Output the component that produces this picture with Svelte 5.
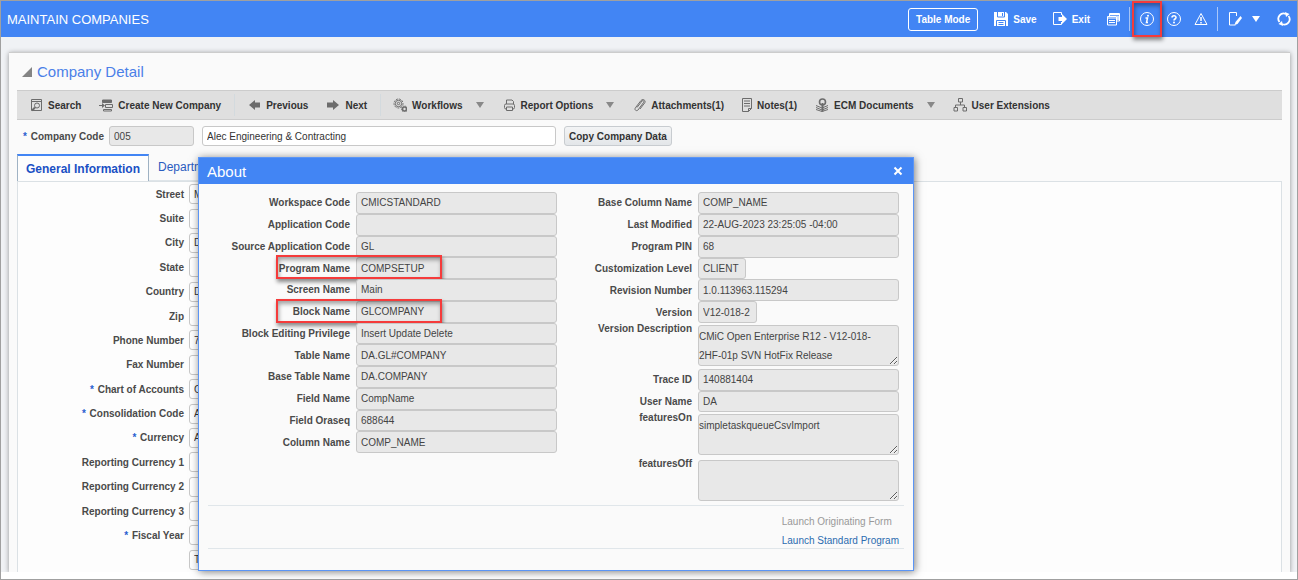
<script lang="ts">
  type Field = {
    label: string
    value: string
    width?: number
    marked?: boolean
  }

  const toolbar = [
    { icon: 'search', label: 'Search' },
    { icon: 'create', label: 'Create New Company', divider: true },
    { icon: 'prev', label: 'Previous' },
    { icon: 'next', label: 'Next', divider: true },
    { icon: 'gears', label: 'Workflows', menu: true },
    { icon: 'print', label: 'Report Options', menu: true },
    { icon: 'clip', label: 'Attachments(1)' },
    { icon: 'notes', label: 'Notes(1)', narrow: true },
    { icon: 'ecm', label: 'ECM Documents', menu: true },
    { icon: 'tree', label: 'User Extensions' },
  ]

  const company = [
    { label: 'Street', value: 'M' },
    { label: 'Suite', value: '' },
    { label: 'City', value: 'D' },
    { label: 'State', value: '' },
    { label: 'Country', value: 'D' },
    { label: 'Zip', value: '' },
    { label: 'Phone Number', value: '7' },
    { label: 'Fax Number', value: '' },
    { label: 'Chart of Accounts', value: 'C', required: true },
    { label: 'Consolidation Code', value: 'A', required: true },
    { label: 'Currency', value: 'A', required: true },
    { label: 'Reporting Currency 1', value: '' },
    { label: 'Reporting Currency 2', value: '' },
    { label: 'Reporting Currency 3', value: '' },
    { label: 'Fiscal Year', value: '', required: true },
    { label: '', value: 'T' },
  ]

  const program: Field[] = [
    { label: 'Workspace Code', value: 'CMICSTANDARD' },
    { label: 'Application Code', value: '' },
    { label: 'Source Application Code', value: 'GL' },
    { label: 'Program Name', value: 'COMPSETUP', marked: true },
    { label: 'Screen Name', value: 'Main' },
    { label: 'Block Name', value: 'GLCOMPANY', marked: true },
    { label: 'Block Editing Privilege', value: 'Insert Update Delete' },
    { label: 'Table Name', value: 'DA.GL#COMPANY' },
    { label: 'Base Table Name', value: 'DA.COMPANY' },
    { label: 'Field Name', value: 'CompName' },
    { label: 'Field Oraseq', value: '688644' },
    { label: 'Column Name', value: 'COMP_NAME' },
  ]

  const version: Field[] = [
    { label: 'Base Column Name', value: 'COMP_NAME' },
    { label: 'Last Modified', value: '22-AUG-2023 23:25:05 -04:00' },
    { label: 'Program PIN', value: '68' },
    { label: 'Customization Level', value: 'CLIENT', width: 48 },
    { label: 'Revision Number', value: '1.0.113963.115294' },
    { label: 'Version', value: 'V12-018-2', width: 59 },
  ]

  const session: Field[] = [
    { label: 'Trace ID', value: '140881404' },
    { label: 'User Name', value: 'DA' },
  ]

  let aboutOpen = $state(true)
  let expanded = $state(true)
</script>

{#snippet icon(name: string)}
  {#if name === 'search'}
    <path d="M2.5 1.5h10v11h-10z M2.5 3.5h10" />
    <circle cx="8" cy="7.5" r="2.5" />
    <path d="M6 9.5l-3 3" stroke-width="2" />
  {:else if name === 'create'}
    <path d="M3.5 2h9v2.5h-9z" fill="currentColor" />
    <path d="M6.5 6.5h7v3h-7z M4.5 11.5h8v1.5h-8z M0 7.5h4" />
    <path d="M3 5l3 2.5L3 10z" fill="currentColor" stroke="none" />
  {:else if name === 'prev'}
    <path d="M2 7l6-5v2.5h5v5H8V12z" fill="currentColor" stroke="none" />
  {:else if name === 'next'}
    <path d="M13 7L7 2v2.5H1v5h6V12z" fill="currentColor" stroke="none" />
  {:else if name === 'gears'}
    <circle cx="5.5" cy="5.5" r="4.5" stroke-dasharray="2 1" />
    <circle cx="5.5" cy="5.5" r="3.2" />
    <circle cx="5.5" cy="5.5" r="1.2" />
    <circle cx="11.5" cy="11" r="2" stroke-width="1.6" />
    <circle cx="11.5" cy="11" r="3" stroke-dasharray="1 1" />
  {:else if name === 'print'}
    <path d="M4.5 6V2h5.5l1.5 1.5V6" />
    <rect x="2.5" y="6" width="10" height="5" rx="1.5" />
    <path d="M4.5 9h6v3.5h-6z" fill="#dfdfdf" />
  {:else if name === 'clip'}
    <path d="M5 9.5l5-6.5c1-1 2.5 0 1.7 1.3L6 12c-1.5 1.5-4 0-2.6-2.2L9 2.500c2-2.200 5.300 0 3.700 2.400L8 11" />
  {:else if name === 'notes'}
    <path d="M.5.5h9v10l-3 3h-6z M9.5 10.5h-3v3 M2 3h6M2 5.5h6M2 8h6" />
  {:else if name === 'ecm'}
    <path d="M1 7.5l6 2.5 6-2.5M1 9.5l6 2.5 6-2.5M1 11.5l6 2 6-2" />
    <circle cx="7.5" cy="4" r="3" stroke-width="1.6" fill="#dfdfdf" />
    <path d="M7.5 5v8.5" stroke-width="2" />
  {:else if name === 'tree'}
    <path d="M5.5.5h4v3.5h-4z M1 9.5h3.5V13H1z M10 9.5h3.5V13H10z M7.5 4v3M2.5 9.5V7h9v2.5" />
  {:else if name === 'save'}
    <path d="M0 0h12l2 2v12H0z" fill="currentColor" stroke="none" />
    <path d="M3.5 0v5h7V0M2.5 14V8.5h9V14" stroke="#4285f4" />
    <path d="M8.5 1v3M4.5 10.5h5M4.5 12.5h5" stroke="#4285f4" />
  {:else if name === 'exit'}
    <path d="M8.5 3V.5h-8v12h8V10" />
    <path d="M5.5 5H9V2l5 5-5 5V9H5.500z" fill="currentColor" stroke="none" />
  {:else if name === 'windows'}
    <path d="M3.5 4V1.5h10v7.5H11" />
    <path d="M4 2.5h9M12 4v4" stroke-width="1.5" />
    <path d="M1.5 4.5h9v8.5h-9z M1.5 6h9M3 8.5h6M3 10.5h6" />
  {:else if name === 'info'}
    <circle cx="7" cy="7" r="6.500" />
    <path d="M5.500 6h2l-1 4.500h1.500" stroke-width="1.5" />
    <circle cx="8" cy="3.8" r="1" fill="currentColor" stroke="none" />
  {:else if name === 'help'}
    <circle cx="7" cy="7" r="6.500" />
    <path d="M5 5.6c0-2.400 4.200-2.400 4 0C9 7 7 7 7 8.500" stroke-width="1.6" />
    <circle cx="7" cy="10.5" r="1" fill="currentColor" stroke="none" />
  {:else if name === 'warn'}
    <path d="M7 1.500L13 12.500H1z" />
    <path d="M7 5v4M7 10v1.500" stroke-width="1.5" />
  {:else if name === 'edit'}
    <path d="M8.500 4V.5h-7v12.500h6" />
    <path d="M12.500 4l-5 6-1 3 3-1 4.500-6z" fill="currentColor" stroke="none" />
  {:else if name === 'refresh'}
    <path d="M2.500 10A5.300 5.300 0 0 1 9 2M11.500 4A5.300 5.300 0 0 1 5 12" stroke-width="1.8" />
    <path d="M8 0l4.500 2L9 5z M6 14l-4.500-2L5 9z" fill="currentColor" stroke="none" />
  {/if}
{/snippet}

{#snippet glyph(name: string, narrow = false)}
  <svg
    class="icon"
    class:narrow
    viewBox={narrow ? '0 0 10 14' : '0 0 14 14'}
    aria-hidden="true"
  >
    {@render icon(name)}
  </svg>
{/snippet}

{#snippet readonlyRow(field: Field)}
  <div class="about-row">
    <label for={field.label}>{field.label}</label>
    <input
      id={field.label}
      value={field.value}
      style:width={field.width ? `${field.width}px` : undefined}
      readonly
    />
    {#if field.marked}<span class="mark"></span>{/if}
  </div>
{/snippet}

{#snippet noteRow(label: string, value: string)}
  <div class="about-row note">
    <label for={label}>{label}</label>
    <textarea id={label} {value} readonly></textarea>
  </div>
{/snippet}

<div class="page">
  <header>
    <h1>MAINTAIN COMPANIES</h1>
    <div class="actions">
      <button class="mode">Table Mode</button>
      <button>{@render glyph('save')}Save</button>
      <button>{@render glyph('exit')}Exit</button>
      <button aria-label="Windows">{@render glyph('windows')}</button>
    </div>
    <span class="rule"></span>
    <div class="actions tight">
      <button class="about-button" aria-label="About" onclick={() => (aboutOpen = true)}>
        {@render glyph('info')}
        <span class="mark"></span>
      </button>
      <button aria-label="Help">{@render glyph('help')}</button>
      <button aria-label="Warnings">{@render glyph('warn')}</button>
    </div>
    <span class="rule"></span>
    <button aria-label="Edit">{@render glyph('edit')}<span class="caret"></span></button>
    <button class="refresh" aria-label="Refresh">{@render glyph('refresh')}</button>
  </header>

  <main>
    <section class="panel">
      <h2>
        <button class="disclose" aria-label="Toggle" onclick={() => (expanded = !expanded)}></button>
        Company Detail
      </h2>

      {#if expanded}
        <nav class="toolbar">
          {#each toolbar as item}
            <button>
              {@render glyph(item.icon, item.narrow)}
              {item.label}
              {#if item.menu}<span class="caret"></span>{/if}
            </button>
            {#if item.divider}<span class="divider"></span>{/if}
          {/each}
        </nav>

        <div class="company">
          <div class="code">
            <label for="code"><i>*</i> Company Code</label>
            <input id="code" value="005" readonly />
          </div>
          <input class="name" aria-label="Company Name" value="Alec Engineering & Contracting" />
          <button>Copy Company Data</button>
        </div>

        <div class="tabs">
          <button class="active">General Information</button>
          <button>Departments</button>
        </div>

        <div class="fields">
          {#each company as field, i}
            <div class="field">
              <label for="company-{i}">
                {#if field.required}<i>*</i>{/if}
                {field.label}
              </label>
              <input id="company-{i}" value={field.value} />
            </div>
          {/each}
        </div>
      {/if}
    </section>
  </main>

  {#if aboutOpen}
    <div class="about" role="dialog" aria-labelledby="about-title">
      <div class="about-head">
        <h2 id="about-title">About</h2>
        <button aria-label="Close" onclick={() => (aboutOpen = false)}>
          <svg viewBox="0 0 10 10" aria-hidden="true"><path d="M1.5 1.5l7 7M8.5 1.5l-7 7" /></svg>
        </button>
      </div>
      <div class="about-body">
        <div class="columns">
          <div class="column">
            <div class="rows program">
              {#each program as field}{@render readonlyRow(field)}{/each}
            </div>
          </div>
          <div class="column right">
            <div class="rows version">
              {#each version as field}{@render readonlyRow(field)}{/each}
            </div>
            {@render noteRow('Version Description', 'CMiC Open Enterprise R12 - V12-018-2HF-01p SVN HotFix Release')}
            <div class="rows session">
              {#each session as field}{@render readonlyRow(field)}{/each}
            </div>
            {@render noteRow('featuresOn', 'simpletaskqueueCsvImport')}
            {@render noteRow('featuresOff', '')}
          </div>
        </div>
        <div class="links">
          <div>
            <span>Launch Originating Form</span>
            <a href="#standard">Launch Standard Program</a>
          </div>
        </div>
      </div>
    </div>
  {/if}
</div>

<style>
  :global(body) {
    background: #fff;
  }

  .page,
  .page * {
    box-sizing: border-box;
  }

  .page {
    position: relative;
    display: flex;
    flex-direction: column;
    min-height: 100vh;
    padding-bottom: 7px;
    border: 1px solid #a0a0a0;
    font-family: 'Liberation Sans', Arial, sans-serif;
    font-size: 10px;
    color: #333;
  }

  h1,
  h2 {
    margin: 0;
    font-weight: 400;
  }

  button {
    display: flex;
    align-items: center;
    gap: 5px;
    padding: 0;
    border: 0;
    background: none;
    color: inherit;
    font: inherit;
    font-weight: 700;
    white-space: nowrap;
    cursor: pointer;
  }

  input,
  textarea {
    margin: 0;
    border: 1px solid #c8c8c8;
    border-radius: 3px;
    background: #fff;
    color: #333;
    font: inherit;
    outline: none;
  }
  input {
    height: 20px;
    padding: 0 4px;
  }
  input:read-only,
  textarea:read-only {
    background: #e8e8e8;
    color: #444;
  }

  label {
    font-weight: 700;
    color: #4a4a4a;
    white-space: nowrap;
  }
  label i {
    margin-right: 1px;
    font-style: normal;
    color: #2a5fd0;
  }

  .icon {
    width: 14px;
    height: 14px;
    flex-shrink: 0;
    fill: none;
    stroke: currentColor;
  }
  .icon.narrow {
    width: 10px;
  }

  .caret {
    border: 4px solid transparent;
    border-top: 6px solid currentColor;
    border-bottom: 0;
  }

  .mark {
    position: absolute;
    border: 2px solid #f53b3b;
    box-shadow:
      1px 3px 4px rgba(0, 0, 0, 0.45),
      inset 1px 3px 4px rgba(0, 0, 0, 0.35);
    pointer-events: none;
  }

  header {
    display: flex;
    align-items: center;
    height: 36px;
    padding: 0 6px;
    background: #4285f4;
    color: #fff;
  }
  header h1 {
    margin-right: auto;
    font-size: 13px;
  }
  .actions {
    display: flex;
    align-items: center;
    gap: 16px;
  }
  .actions.tight {
    gap: 13px;
  }
  header .mode {
    height: 23px;
    padding: 0 7px;
    border: 1px solid #fff;
    border-radius: 3px;
  }
  .rule {
    width: 1px;
    height: 24px;
    margin: 0 10px 0 9px;
    background: #a9c7fa;
  }
  header .caret {
    margin-left: 5px;
  }
  header .refresh {
    margin-left: 17px;
  }
  .about-button {
    position: relative;
  }
  .about-button .mark {
    inset: -11px -8px;
  }

  main {
    display: flex;
    flex: 1;
    padding: 15px 7px 0 8px;
    background: #f0f2f5;
    overflow: hidden;
  }

  .panel {
    display: flex;
    flex: 1;
    flex-direction: column;
    min-width: 0;
    padding: 0 8px;
    border-top: 1px solid #ccc;
    background: #fafafa;
    box-shadow: 0 1px 5px rgba(0, 0, 0, 0.4);
  }
  .panel > h2 {
    display: flex;
    align-items: center;
    gap: 5px;
    height: 37px;
    padding-left: 5px;
    font-size: 15px;
    color: #4a80e8;
  }
  .disclose {
    border: 5px solid #848484;
    border-top-color: transparent;
    border-left-color: transparent;
  }

  .toolbar {
    display: flex;
    align-items: center;
    height: 30px;
    padding-left: 3px;
    border: 1px solid #ccc;
    border-width: 1px 0;
    background: #dfdfdf;
  }
  .toolbar button {
    padding: 0 9px;
  }
  .toolbar .icon {
    color: #6c6c6c;
  }
  .toolbar .caret {
    margin-left: 8px;
    color: #888;
  }
  .divider {
    width: 1px;
    height: 22px;
    margin: 0 3px 0 4px;
    background: #d3dade;
  }

  .company {
    display: flex;
    align-items: center;
    gap: 8px;
    padding: 6px 0 8px 6px;
  }
  .company .code {
    display: flex;
    align-items: center;
    gap: 5px;
  }
  .code input {
    width: 85px;
  }
  .company .name {
    width: 354px;
  }
  .company button {
    height: 20px;
    padding: 0 4px;
    border: 1px solid #c8ccd0;
    border-radius: 3px;
    background: linear-gradient(#f3f4f5, #e3e6e9);
  }

  .tabs {
    display: flex;
    height: 27px;
  }
  .tabs button {
    padding: 0 9px;
    border-bottom: 1px solid #dfe5e9;
    color: #2a5cc0;
    font-size: 12px;
    font-weight: 400;
  }
  .tabs .active {
    padding: 0 8px;
    border: 1px solid #9fb2c4;
    border-top: 2px solid #4285f4;
    border-bottom: 0;
    background: #fdfdfd;
    color: #1a50c4;
    font-weight: 700;
  }

  .fields {
    display: grid;
    flex: 1;
    grid-auto-rows: 1fr;
    border: 1px solid #dbe1e5;
    border-bottom: 0;
    background: #fdfdfd;
  }
  .field {
    display: grid;
    grid-template-columns: 166px 354px;
    align-items: center;
    gap: 5px;
  }
  .field label {
    text-align: right;
  }

  .about {
    position: absolute;
    top: 156px;
    left: 197px;
    width: 716px;
    border: 1px solid #5b95f5;
    background: #fafafa;
    box-shadow: 1px 1px 8px rgba(0, 0, 0, 0.5);
  }
  .about-head {
    display: flex;
    align-items: center;
    justify-content: space-between;
    height: 26px;
    padding: 0 10px 0 8px;
    background: #4285f4;
    color: #fff;
  }
  .about-head h2 {
    font-size: 15px;
  }
  .about-head svg {
    width: 10px;
    height: 10px;
    stroke: #fff;
    stroke-width: 2;
  }
  .about-body {
    padding: 8px 9px 21px;
  }
  .columns {
    display: flex;
    gap: 1px;
    padding-bottom: 1px;
  }
  .rows {
    display: grid;
    grid-auto-rows: 1fr;
  }
  .rows.program {
    height: 261px;
  }
  .rows.version {
    height: 131px;
  }
  .rows.session {
    height: 43px;
  }
  .about-row {
    position: relative;
    display: grid;
    grid-template-columns: 142px 201px;
    gap: 6px;
    align-items: center;
    min-height: 0;
  }
  .right .about-row {
    grid-template-columns: 134px 201px;
  }
  .about-row label {
    text-align: right;
  }
  .about-row input {
    width: 100%;
    height: 100%;
  }
  .about-row .mark {
    inset: -2px 115px 0 68px;
  }
  .about-row.note {
    align-items: start;
    padding-bottom: 3px;
  }
  .about-row textarea {
    height: 41px;
    margin-top: 2px;
    padding: 1px 12px 1px 0;
    line-height: 19px;
    overflow: hidden;
    resize: both;
  }

  .links {
    display: flex;
    justify-content: flex-end;
    padding: 6px 5px 0 0;
    height: 44px;
    border: 1px solid #e0e6ea;
    border-width: 1px 0;
    line-height: 19px;
  }
  .links div {
    display: flex;
    flex-direction: column;
  }
  .links span {
    color: #999;
  }
  .links a {
    color: #2b6cb0;
    text-decoration: none;
  }
</style>
